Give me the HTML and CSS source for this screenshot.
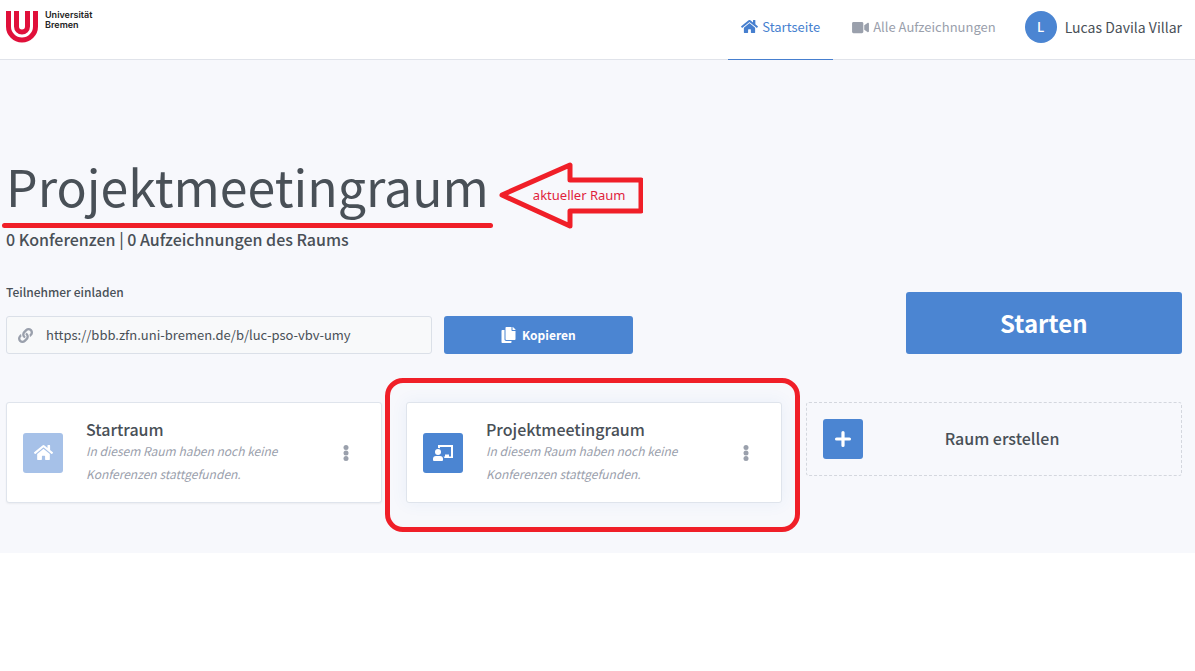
FILE: index.html
```html
<!DOCTYPE html>
<html lang="de">
<head>
<meta charset="utf-8">
<title>Projektmeetingraum</title>
<link rel="stylesheet" href="styles.css">
</head>
<body>
<svg class="sprite" aria-hidden="true">
  <symbol id="home" viewBox="0 0 576 512"><path d="M280.37 148.26L96 300.11V464a16 16 0 0 0 16 16l112.06-.29a16 16 0 0 0 15.92-16V368a16 16 0 0 1 16-16h64a16 16 0 0 1 16 16v95.64a16 16 0 0 0 16 16.05L464 480a16 16 0 0 0 16-16V300L295.67 148.26a12.19 12.19 0 0 0-15.3 0zM571.6 251.47L488 182.56V44.05a12 12 0 0 0-12-12h-56a12 12 0 0 0-12 12v72.61L318.47 43a48 48 0 0 0-61 0L4.34 251.47a12 12 0 0 0-1.6 16.9l25.5 31A12 12 0 0 0 45.15 301l235.22-193.74a12.19 12.19 0 0 1 15.3 0L530.9 301a12 12 0 0 0 16.9-1.6l25.5-31a12 12 0 0 0-1.7-16.93z"/></symbol>
  <symbol id="dots" viewBox="0 0 6 16"><circle cx="3" cy="2.5" r="2.5"/><circle cx="3" cy="8" r="2.5"/><circle cx="3" cy="13.500" r="2.5"/></symbol>
</svg>
<header class="header">
  <a class="logo" href="#" aria-label="Universität Bremen">
    <svg class="logo-mark" viewBox="0 0 32 32" aria-hidden="true"><g fill="none" stroke="#e0103a"><path stroke-width="5" d="M2.500 0v15.500a13.500 13.500 0 0 0 27 0V0"/><path stroke-width="5" d="M10.500 0v15.500a5.500 5.500 0 0 0 11 0V0"/></g></svg>
    <span class="logo-text">Universität<br>Bremen</span>
  </a>
  <nav class="nav">
    <a class="nav-item active" href="#"><svg class="icon-nav" aria-hidden="true"><use href="#home"/></svg>Startseite</a>
    <a class="nav-item" href="#"><svg class="icon-nav" viewBox="0 0 576 512" aria-hidden="true"><path d="M336.200 64H47.800C21.400 64 0 85.400 0 111.800v288.400C0 426.600 21.400 448 47.800 448h288.400c26.400 0 47.800-21.400 47.800-47.800V111.800c0-26.400-21.400-47.800-47.800-47.800zm189.400 37.700L416 177.300v157.400l109.600 75.500c21.200 14.600 50.400-.3 50.400-25.800V127.500c0-25.400-29.100-40.400-50.400-25.800z"/></svg>Alle Aufzeichnungen</a>
  </nav>
  <a class="user" href="#"><span class="avatar">L</span><span class="user-name">Lucas Davila Villar</span></a>
</header>
<main class="main">
  <div class="title-row">
    <h1 class="title">Projektmeetingraum</h1>
    <div class="arrow">
      <svg class="arrow-shape" viewBox="0 0 144 68" aria-hidden="true"><path d="M3 34 71 4v15h71v31H71v15z" fill="none" stroke="#f01f28" stroke-width="5" stroke-linejoin="round"/></svg>
      <span class="arrow-text">aktueller Raum</span>
    </div>
  </div>
  <p class="stats">0 Konferenzen | 0 Aufzeichnungen des Raums</p>
  <div class="actions">
    <div class="invite">
      <label class="invite-label" for="url">Teilnehmer einladen</label>
      <div class="url-box">
        <svg class="icon-link" viewBox="0 0 512 512" aria-hidden="true"><path d="M326.612 185.391c59.747 59.809 58.927 155.698.36 214.59-.11.12-.24.25-.36.37l-67.2 67.2c-59.27 59.27-155.699 59.262-214.96 0-59.27-59.26-59.27-155.7 0-214.96l37.106-37.106c9.84-9.84 26.786-3.3 27.294 10.606.648 17.722 3.826 35.527 9.69 52.721 1.986 5.822.567 12.262-3.783 16.612l-13.087 13.087c-28.026 28.026-28.905 73.66-1.155 101.96 28.024 28.579 74.086 28.749 102.325.51l67.2-67.19c28.191-28.191 28.073-73.757 0-101.83-3.701-3.694-7.429-6.564-10.341-8.569a16.037 16.037 0 0 1-6.947-12.606c-.396-10.567 3.348-21.456 11.698-29.806l21.054-21.055c5.521-5.521 14.182-6.199 20.584-1.731a152.482 152.482 0 0 1 20.522 17.197zM467.547 44.449c-59.261-59.262-155.69-59.27-214.96 0l-67.2 67.2c-.12.12-.25.25-.36.37-58.566 58.892-59.387 154.781.36 214.59a152.454 152.454 0 0 0 20.521 17.196c6.402 4.468 15.064 3.789 20.584-1.731l21.054-21.055c8.35-8.35 12.094-19.239 11.698-29.806a16.037 16.037 0 0 0-6.947-12.606c-2.912-2.005-6.64-4.875-10.341-8.569-28.073-28.073-28.191-73.639 0-101.83l67.2-67.19c28.239-28.239 74.3-28.069 102.325.51 27.75 28.3 26.872 73.934-1.155 101.96l-13.087 13.087c-4.35 4.35-5.769 10.79-3.783 16.612 5.864 17.194 9.042 34.999 9.69 52.721.509 13.906 17.454 20.446 27.294 10.606l37.106-37.106c59.271-59.259 59.271-155.699.001-214.959z"/></svg>
        <input class="url" id="url" type="text" readonly value="https://bbb.zfn.uni-bremen.de/b/luc-pso-vbv-umy">
      </div>
      <button class="button copy" type="button"><svg class="icon-copy" viewBox="0 0 448 512" aria-hidden="true"><path d="M320 448v40c0 13.255-10.745 24-24 24H24c-13.255 0-24-10.745-24-24V120c0-13.255 10.745-24 24-24h72v296c0 30.879 25.121 56 56 56h168zm0-344V0H152c-13.255 0-24 10.745-24 24v368c0 13.255 10.745 24 24 24h272c13.255 0 24-10.745 24-24V128H344c-13.200 0-24-10.800-24-24zm120.971-31.029L375.029 7.029A24 24 0 0 0 358.059 0H352v96h96v-6.059a24 24 0 0 0-7.029-16.970z"/></svg>Kopieren</button>
    </div>
    <button class="button start" type="button">Starten</button>
  </div>
  <div class="rooms">
    <article class="card">
      <span class="tile tile-light"><svg class="icon-tile" aria-hidden="true"><use href="#home"/></svg></span>
      <div class="card-body"><h2 class="card-title">Startraum</h2><p class="card-note">In diesem Raum haben noch keine Konferenzen stattgefunden.</p></div>
      <button class="menu" type="button" aria-label="Optionen"><svg class="icon-dots" aria-hidden="true"><use href="#dots"/></svg></button>
    </article>
    <article class="card current">
      <span class="tile"><svg class="icon-board" viewBox="0 0 20 16" aria-hidden="true"><path d="M5 3V0h15v13h-8.500a4 4 0 0 0-1-1.500H12V9.500h4v2h2V2H7v1.300A4 4 0 0 0 5 3z"/><circle cx="5" cy="7" r="3"/><path d="M3 11h4a3 3 0 0 1 3 3v1a1 1 0 0 1-1 1H1a1 1 0 0 1-1-1v-1a3 3 0 0 1 3-3z"/></svg></span>
      <div class="card-body"><h2 class="card-title">Projektmeetingraum</h2><p class="card-note">In diesem Raum haben noch keine Konferenzen stattgefunden.</p></div>
      <button class="menu" type="button" aria-label="Optionen"><svg class="icon-dots" aria-hidden="true"><use href="#dots"/></svg></button>
    </article>
    <button class="create" type="button">
      <span class="tile"><svg class="icon-plus" viewBox="0 0 14 14" aria-hidden="true"><path d="M7 2v10M2 7h10" stroke="#fff" stroke-width="2.500" stroke-linecap="round"/></svg></span>
      <span class="create-text">Raum erstellen</span>
    </button>
  </div>
</main>
</body>
</html>
```
FILE: styles.css
```css
* { box-sizing: border-box; }
body {
  margin: 0;
  background: #fff;
  color: #495057;
  font-family: "Noto Sans CJK SC", "Noto Sans", sans-serif;
  font-size: 13px;
  line-height: 24px;
}
h1, h2, p { margin: 0; }
a { color: inherit; text-decoration: none; }
button, input { font: inherit; color: inherit; }
svg { fill: currentColor; flex: none; }
.sprite { display: none; }

.header {
  display: flex;
  height: 60px;
  padding: 0 13px 0 6px;
  border-bottom: 1px solid #e0e3ea;
}
.logo { display: flex; gap: 7px; padding-top: 10px; color: #222; }
.logo-mark { width: 32px; height: 32px; margin-top: 1px; }
.logo-text { font: 600 9px/10px Inter, sans-serif; }
.nav { display: flex; gap: 6px; margin-left: auto; }
.nav-item {
  display: flex;
  align-items: center;
  gap: 4px;
  height: 60px;
  padding: 0 13px 6px;
  color: #9aa0ac;
}
.nav-item.active { color: #467fcf; border-bottom: 1px solid #467fcf; }
.icon-nav { width: 17px; height: 15px; }
.user { display: flex; align-items: center; gap: 8px; padding-bottom: 5px; margin-left: 16px; }
.user-name { font-size: 14px; }
.avatar {
  width: 32px;
  height: 32px;
  border-radius: 50%;
  background: #4b85d2;
  color: #fff;
  font-weight: 500;
  line-height: 32px;
  text-align: center;
}

.main { padding: 92px 13px 50px 6px; background: #f7f8fc; }
.title-row { display: flex; align-items: flex-start; gap: 10px; }
.title { position: relative; font-size: 50px; font-weight: 400; line-height: 66px; }
.title::after {
  content: "";
  position: absolute;
  left: -4px;
  right: -4px;
  bottom: -10px;
  height: 5px;
  border-radius: 3px;
  background: #f01f28;
}
.arrow { position: relative; width: 144px; height: 68px; margin: 9px 0 -6px; }
.arrow-shape { display: block; width: 144px; height: 68px; }
.arrow-text {
  position: absolute;
  inset: 0 0 0 34px;
  color: #e01f3c;
  font: 13px/68px "Noto Sans", sans-serif;
}
.stats { padding-top: 4px; font-size: 16px; font-weight: 500; }
.actions { display: flex; justify-content: space-between; align-items: flex-end; padding-top: 29px; }
.invite { display: grid; grid-template-columns: 426fr 189fr; gap: 12px; width: 53.3%; }
.invite-label { grid-column: 1 / -1; font-size: 12px; font-weight: 500; }
.url-box {
  display: flex;
  align-items: center;
  gap: 13px;
  height: 38px;
  padding: 0 11px;
  border: 1px solid #dbe0e8;
  border-radius: 3px;
  background: #f8f9fa;
}
.icon-link { width: 15px; height: 15px; color: #9aa0ac; }
.url { flex: 1; min-width: 0; padding: 0; border: 0; background: none; }
.button { border: 0; border-radius: 3px; background: #4b85d2; color: #fff; font-weight: 700; }
.copy { display: flex; align-items: center; justify-content: center; gap: 6px; font-size: 12px; }
.icon-copy { width: 15px; height: 16px; }
.start { width: 23.5%; height: 62px; font-size: 24px; }

.rooms { display: grid; grid-template-columns: repeat(3, 1fr); gap: 24px; align-items: start; padding-top: 48px; }
.card {
  position: relative;
  display: flex;
  align-items: center;
  height: 101px;
  padding: 0 32px 0 16px;
  border: 1px solid #dfe4ec;
  border-radius: 3px;
  background: #fff;
  box-shadow: 0 1px 2px rgba(0, 0, 0, .05);
}
.current { box-shadow: 0 0 16px rgba(70, 127, 207, .08); }
.current::after {
  content: "";
  position: absolute;
  inset: -25px -19px -30px -22px;
  border: 5px solid #f01f28;
  border-radius: 18px;
  pointer-events: none;
}
.tile {
  display: flex;
  align-items: center;
  justify-content: center;
  flex: none;
  width: 40px;
  height: 40px;
  border-radius: 3px;
  background: #4b85d2;
  color: #fff;
}
.tile-light { background: #a6c1e8; }
.icon-tile { width: 19px; height: 17px; }
.icon-board { width: 20px; height: 16px; }
.icon-plus { width: 18px; height: 18px; }
.card-body { width: 210px; margin: 0 auto 0 23px; padding-bottom: 2px; }
.card-title { font-size: 16px; font-weight: 500; line-height: 20px; }
.card-note { color: #9aa0ac; font-size: 12px; font-style: italic; line-height: 23px; }
.menu { display: flex; padding: 0; border: 0; background: none; color: #9aa0ac; }
.icon-dots { width: 6px; height: 16px; }
.create {
  display: flex;
  align-items: center;
  height: 74px;
  padding: 0 16px;
  border: 1px dashed #d4d7de;
  border-radius: 3px;
  background: none;
}
.create-text { flex: 1; padding: 0 24px 3px 0; font-size: 16px; font-weight: 500; }
```
